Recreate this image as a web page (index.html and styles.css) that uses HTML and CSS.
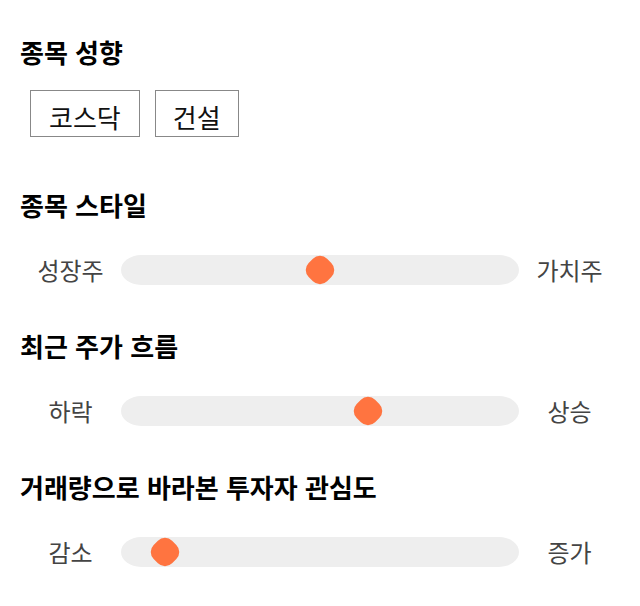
FILE: index.html
```html
<!DOCTYPE html>
<html lang="ko">
<head>
    <meta charset="UTF-8">
    <meta name="viewport" content="width=device-width, initial-scale=1.0">
    <title>종목 분석</title>
    <link rel="stylesheet" href="styles.css">
</head>
<body>
    <div class="panel">
        <div class="section first">
            <h2 class="title">종목 성향</h2>
            <div class="tags">
                <span class="tag">코스닥</span>
                <span class="tag">건설</span>
            </div>
        </div>

        <div class="section">
            <h2 class="title">종목 스타일</h2>
            <div class="scale">
                <span class="label">성장주</span>
                <div class="track"><span class="thumb" style="left: 50%;"></span></div>
                <span class="label">가치주</span>
            </div>
        </div>

        <div class="section">
            <h2 class="title">최근 주가 흐름</h2>
            <div class="scale">
                <span class="label">하락</span>
                <div class="track"><span class="thumb" style="left: 62%;"></span></div>
                <span class="label">상승</span>
            </div>
        </div>

        <div class="section">
            <h2 class="title">거래량으로 바라본 투자자 관심도</h2>
            <div class="scale">
                <span class="label">감소</span>
                <div class="track"><span class="thumb" style="left: 11%;"></span></div>
                <span class="label">증가</span>
            </div>
        </div>
    </div>
</body>
</html>
```

FILE: styles.css
```css
body {
    margin: 0;
    background: #fff;
    font-family: "Noto Sans CJK KR", "Noto Sans", sans-serif;
    color: #000;
}
.panel {
    padding: 35px 20px 0 20px;
}
.section {
    margin-bottom: 44px;
}
.section.first {
    margin-bottom: 51px;
}
.title {
    margin: 0;
    font-size: 26px;
    line-height: 34px;
    font-weight: 700;
}
.tags {
    display: flex;
    gap: 15px;
    margin-top: 21px;
    padding-left: 10px;
}
.tag {
    border: 1px solid #888;
    padding: 8px 18px 2px 18px;
    font-size: 26px;
    line-height: 35px;
    color: #111;
}
.tag + .tag {
    padding: 8px 17px 2px 17px;
}
.scale {
    display: flex;
    align-items: center;
    margin-top: 33px;
}
.label {
    width: 101px;
    text-align: center;
    font-size: 24px;
    line-height: 30px;
    color: #444;
}
.track {
    position: relative;
    width: 398px;
    height: 30px;
    background: #eee;
    border-radius: 20px / 15px;
}
.thumb {
    position: absolute;
    top: 2px;
    width: 26px;
    height: 26px;
    margin-left: -13px;
    background: #ff7440;
    border-radius: 10px;
    transform: rotate(45deg);
}
```
